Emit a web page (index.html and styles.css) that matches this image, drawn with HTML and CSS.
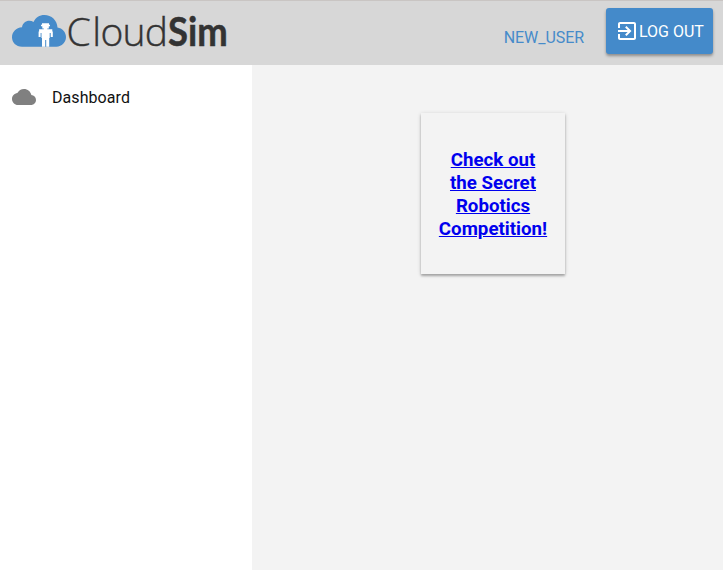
FILE: index.html
```html
<!DOCTYPE html>
<html lang="en">
<head>
<meta charset="utf-8">
<title>CloudSim</title>
<link rel="stylesheet" href="styles.css">
</head>
<body>
<header class="toolbar">
  <svg class="logo" width="220" height="40" viewBox="10 10 220 40" role="img" aria-label="CloudSim">
    <path class="logo-cloud" d="M22 46.700C16 46.700 12 42.300 12 37.200C12 32 16 27.600 22 27.200C22.600 23.500 25.600 20.800 29.400 20.800C31 20.800 32.300 21.200 33.500 21.900C35.600 17.700 39.600 15 44.400 15C51.500 15 57.200 20.300 57.500 27.500C62.300 28.200 66 32.200 66 37.100C66 42.400 61.800 46.700 56.500 46.700Z"/>
    <path class="logo-robot" d="M42 23.200H49V24.700H50V26.300H48.800V28.500H47.300V29.300H52.300V31.500H52.800V37H50.700V33H49.700V38H49.200V46.700H46.200V40H45.200V46.700H42V38H41.500V33H40.600V37H38.600V31.500H39.100V29.300H43.800V28.500H42.300V26.300H41V24.700H42Z"/>
    <text class="logo-light" x="66.500 92.200 100.500 122.500 144.800" y="45.600">Cloud</text>
    <text class="logo-bold" transform="translate(168 45.500) scale(.91 1)">Sim</text>
  </svg>
  <span class="user">NEW_USER</span>
  <button class="logout" type="button">
    <svg width="24" height="24" viewBox="0 0 24 24"><path d="M10.090 15.590L11.500 17l5-5-5-5-1.410 1.410L12.670 11H3v2h9.670l-2.580 2.590zM19 3H5c-1.110 0-2 .9-2 2v4h2V5h14v14H5v-4H3v4c0 1.100.89 2 2 2h14c1.100 0 2-.9 2-2V5c0-1.100-.9-2-2-2z"/></svg>
    <span>LOG OUT</span>
  </button>
</header>
<div class="layout">
  <nav class="sidebar">
    <a class="nav-item">
      <svg width="24" height="24" viewBox="0 0 24 24"><path d="M19.350 10.040C18.670 6.590 15.640 4 12 4 9.110 4 6.600 5.640 5.350 8.040 2.340 8.360 0 10.910 0 14c0 3.310 2.690 6 6 6h13c2.760 0 5-2.240 5-5 0-2.640-2.050-4.780-4.650-4.960z"/></svg>
      <span>Dashboard</span>
    </a>
  </nav>
  <main class="content">
    <section class="card"><h3><a href="#">Check out the Secret Robotics Competition!</a></h3></section>
  </main>
</div>
</body>
</html>
```
FILE: styles.css
```css
* { box-sizing: border-box; }
body {
  margin: 0;
  height: 100vh;
  display: flex;
  flex-direction: column;
  overflow: hidden;
  background: #f3f3f3;
  color: #111;
  font: 16px/20px Roboto, sans-serif;
}
.toolbar {
  height: 65px;
  display: flex;
  align-items: flex-start;
  padding: 7px 10px 0;
  background: #d7d7d7;
  border-top: 1px solid #c9c5c3;
}
.logo { margin-top: 2px; overflow: visible; }
.logo-cloud { fill: #468bca; }
.logo-robot { fill: #fff; }
.logo-light { font: 300 39px "Open Sans", sans-serif; fill: #333; stroke: #333; stroke-width: .4px; }
.logo-bold { font: 700 40px Lato, sans-serif; fill: #333; stroke: #333; stroke-width: .5px; }
.user { margin: 20px 22px 0 auto; color: #468bca; letter-spacing: -.06px; }
.logout {
  width: 107px;
  height: 46px;
  display: flex;
  align-items: center;
  padding: 0 0 0 9px;
  border: 0;
  border-radius: 3px;
  background: #448aca;
  color: #fff;
  font: inherit;
  box-shadow: 0 2px 3px rgba(0, 0, 0, .35);
}
.logout svg { fill: currentColor; }
.logout span { padding-top: 2px; }
.layout { flex: 1; display: flex; }
.sidebar { width: 252px; background: #fff; padding-top: 20px; }
.nav-item { display: flex; align-items: center; gap: 16px; padding-left: 12px; }
.nav-item svg { fill: #808080; }
.nav-item span { padding-top: 2px; letter-spacing: .07px; }
.content { flex: 1; padding: 48px 0 0 169px; }
.card {
  width: 144px;
  height: 161px;
  padding: 36px 16px 0;
  text-align: center;
  background: #f3f3f3;
  box-shadow: 0 2px 2px rgba(0, 0, 0, .24), 0 1px 4px rgba(0, 0, 0, .18);
}
.card h3 { margin: 0; font-size: 18.720px; line-height: 23px; font-weight: 700; }
.card a { color: #00e; }
```
